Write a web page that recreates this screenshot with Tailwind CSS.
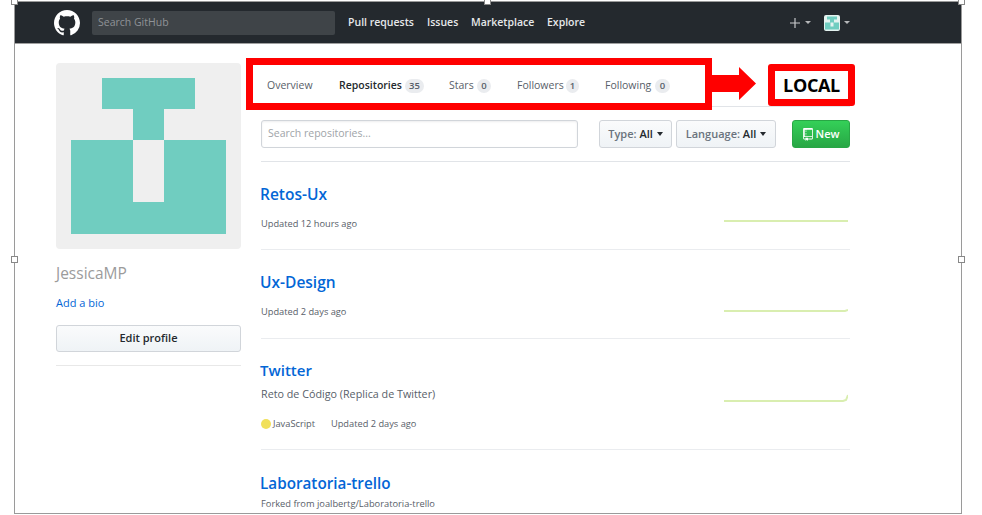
<!doctype html>
<html>
<head>
<meta charset="utf-8">
<script src="https://cdn.jsdelivr.net/npm/@tailwindcss/browser@4"></script>
</head>
<body class="bg-white overflow-hidden">
<div class="relative w-[982px] h-[515px] overflow-hidden font-['Open_Sans',sans-serif] text-[#586069]">
  <div class="ml-[14px] mt-px w-[948px] h-[513px] border border-[#9a9a9a] overflow-hidden">
    <header class="h-[42px] bg-[#24292e] border-b border-[#a0a0a0] flex items-center pl-[39px]">
      <svg viewBox="0 0 16 16" class="w-[26px] h-[26px] fill-white shrink-0"><path d="M8 0C3.58 0 0 3.58 0 8c0 3.54 2.29 6.53 5.47 7.59.4.07.55-.17.55-.38 0-.19-.01-.82-.01-1.49-2.01.37-2.53-.49-2.69-.94-.09-.23-.48-.94-.82-1.13-.28-.15-.68-.52-.01-.53.63-.01 1.08.58 1.23.82.72 1.21 1.87.87 2.33.66.07-.52.28-.87.51-1.07-1.78-.2-3.64-.89-3.64-3.95 0-.87.31-1.59.82-2.15-.08-.2-.36-1.02.08-2.12 0 0 .67-.21 2.2.82.64-.18 1.32-.27 2-.27.68 0 1.36.09 2 .27 1.53-1.04 2.2-.82 2.2-.82.44 1.1.16 1.92.08 2.12.51.56.82 1.27.82 2.15 0 3.07-1.87 3.75-3.65 3.95.29.25.54.73.54 1.48 0 1.07-.01 1.93-.01 2.2 0 .21.15.46.55.38A8.013 8.013 0 0016 8c0-4.42-3.58-8-8-8z"/></svg>
      <div class="ml-3 w-[243px] h-6 bg-[#3f4448] rounded-[2px] flex items-center pl-[6px] text-[10.5px] text-[#8f9397]">Search GitHub</div>
      <nav class="ml-[13px] flex text-[10.5px] font-semibold text-[#e6e8ea] leading-none">
        <span class="w-[79px]">Pull requests</span>
        <span class="w-[44px]">Issues</span>
        <span class="w-[76px]">Marketplace</span>
        <span>Explore</span>
      </nav>
      <div class="ml-auto mr-[111px] flex items-center">
        <svg viewBox="0 0 12 12" class="w-[10px] h-[10px] stroke-[#c9cbcd] fill-none"><path d="M6 0v12M0 6h12" stroke-width="1.4"/></svg>
        <span class="ml-[5px] w-0 h-0 border-x-[3px] border-x-transparent border-t-[3px] border-t-[#b5b7b9]"></span>
        <svg viewBox="0 0 16 16" class="ml-[13px] w-4 h-4 rounded-[2px]"><rect width="16" height="16" fill="#e4f3f0"/><path d="M3 1.5h10v3h-3v3h5v7H1v-7h5v-3H3z" fill="#70cdc0"/><rect x="6.5" y="7.5" width="3" height="4" fill="#e4f3f0"/></svg>
        <span class="ml-[4px] w-0 h-0 border-x-[3px] border-x-transparent border-t-[3px] border-t-[#b5b7b9]"></span>
      </div>
    </header>
    <main class="flex pl-[41px] pt-[19px]">
      <aside class="w-[185px] shrink-0">
        <svg viewBox="0 0 185 186" class="w-[185px] h-[186px] block rounded-[4px] bg-[#efefef]"><path d="M46 15h93v31h-31v31h62v94H15V77h62V46H46z" fill="#70cdc0"/><rect x="77" y="77" width="31" height="62" fill="#efefef"/></svg>
        <div class="mt-[13px] text-[15.5px] leading-[22px] text-[#9b9b9b]">JessicaMP</div>
        <div class="mt-[11px] text-[11px] leading-[16px] text-[#0366d6]">Add a bio</div>
        <button class="mt-[14px] w-full h-[27px] rounded-[3px] border border-[#d1d5da] bg-gradient-to-b from-[#fafbfc] to-[#eff3f6] text-[11px] font-semibold text-[#24292e]">Edit profile</button>
        <div class="mt-[13px] border-t border-[#e8e8e8]"></div>
      </aside>
      <section class="ml-[20px] w-[589px]">
        <div class="h-[44px] border-b border-[#e1e4e8] flex items-center pl-[6px] pt-[2px] text-[10.5px]">
          <span class="w-[72px]">Overview</span>
          <span class="w-[66px] font-semibold text-[#24292e]">Repositories</span>
          <span class="w-[19px] text-center rounded-full bg-[#eaecef] text-[9.5px] leading-[14px] font-semibold text-[#586069]">35</span>
          <span class="ml-[25px] w-[28px]">Stars</span>
          <span class="w-[14px] text-center rounded-full bg-[#eaecef] text-[9.5px] leading-[14px] font-semibold">0</span>
          <span class="ml-[26px] w-[49px]">Followers</span>
          <span class="w-[13px] text-center rounded-full bg-[#eaecef] text-[9.5px] leading-[14px] font-semibold">1</span>
          <span class="ml-[26px] w-[50px]">Following</span>
          <span class="w-[15px] text-center rounded-full bg-[#eaecef] text-[9.5px] leading-[14px] font-semibold">0</span>
        </div>
        <div class="mt-[13px] flex h-[28px] pb-0">
          <div class="w-[317px] rounded-[3px] border border-[#d1d5da] flex items-center pl-[6px] text-[10.5px] text-[#a0a4a8] shadow-[inset_0_1px_2px_rgba(27,31,35,0.075)]">Search repositories...</div>
          <button class="ml-[21px] w-[73px] rounded-[3px] border border-[#d1d5da] bg-gradient-to-b from-[#fafbfc] to-[#eff3f6] text-[11px] font-semibold text-[#24292e] flex items-center justify-center"><span class="text-[#6a737d]">Type:&nbsp;</span>All<span class="ml-1 w-0 h-0 border-x-[3.5px] border-x-transparent border-t-[4px] border-t-[#24292e]"></span></button>
          <button class="ml-[4px] w-[100px] rounded-[3px] border border-[#d1d5da] bg-gradient-to-b from-[#fafbfc] to-[#eff3f6] text-[11px] font-semibold text-[#24292e] flex items-center justify-center"><span class="text-[#6a737d]">Language:&nbsp;</span>All<span class="ml-1 w-0 h-0 border-x-[3.5px] border-x-transparent border-t-[4px] border-t-[#24292e]"></span></button>
          <button class="ml-[16px] w-[58px] rounded-[3px] border border-[#28a745] bg-gradient-to-b from-[#34d058] to-[#28a745] text-[11px] font-semibold text-white flex items-center justify-center"><svg viewBox="0 0 12 16" class="w-[10px] h-[13px] fill-white mr-[3px]"><path d="M4 9H3V8h1v1zm0-3H3v1h1V6zm0-2H3v1h1V4zm0-2H3v1h1V2zm8-1v12c0 .55-.45 1-1 1H6v2l-1.5-1.5L3 16v-2H1c-.55 0-1-.45-1-1V1c0-.55.45-1 1-1h10c.55 0 1 .45 1 1zm-1 10H1v2h2v-1h3v1h5v-2zm0-9H2v8h9V2z"/></svg>New</button>
        </div>
        <div class="mt-[13px] border-t border-[#e1e4e8]"></div>
        <article class="h-[88px] border-b border-[#eaecef] relative pt-[20px]">
          <h3 class="-ml-px text-[15.5px] leading-[24px] font-semibold text-[#0366d6]">Retos-Ux</h3>
          <p class="mt-[11px] text-[9.25px] leading-[14px]">Updated 12 hours ago</p>
          <svg viewBox="0 0 124 4" class="absolute left-[463px] top-[57px] w-[124px] h-1 fill-none stroke-[#d9eeb0]"><path d="M0 2h124" stroke-width="2"/></svg>
        </article>
        <article class="h-[89px] border-b border-[#eaecef] relative pt-[20px]">
          <h3 class="-ml-px text-[15.5px] leading-[24px] font-semibold text-[#0366d6]">Ux-Design</h3>
          <p class="mt-[11px] text-[9.25px] leading-[14px]">Updated 2 days ago</p>
          <svg viewBox="0 0 124 6" class="absolute left-[463px] top-[57px] w-[124px] h-[6px] fill-none stroke-[#d9eeb0]"><path d="M0 4h121l3-1" stroke-width="2"/></svg>
        </article>
        <article class="h-[111px] border-b border-[#eaecef] relative pt-[19px]">
          <h3 class="-ml-px text-[15px] leading-[24px] font-semibold text-[#0366d6]">Twitter</h3>
          <p class="mt-[4px] text-[10.75px] leading-[16px]">Reto de Código (Replica de Twitter)</p>
          <p class="mt-[15px] flex items-center text-[9.25px] leading-[14px]"><span class="w-[10px] h-[10px] rounded-full bg-[#f1e05a] mr-[2px]"></span>JavaScript<span class="ml-4">Updated 2 days ago</span></p>
          <svg viewBox="0 0 124 10" class="absolute left-[463px] top-[54px] w-[124px] h-[10px] fill-none stroke-[#d9eeb0]"><path d="M0 8h119l3-1 2-5" stroke-width="2"/></svg>
        </article>
        <article class="relative pt-[21px]">
          <h3 class="-ml-px text-[15.25px] leading-[24px] font-semibold text-[#0366d6]">Laboratoria-trello</h3>
          <p class="mt-[2px] text-[9.3px] leading-[14px]">Forked from joalbertg/Laboratoria-trello</p>
        </article>
      </section>
    </main>
  </div>

  <!-- annotation layer -->
  <div class="absolute left-[246px] top-[58px] w-[466px] h-[52px] border-[7px] border-[#ff0000]"></div>
  <svg viewBox="0 0 44 33" class="absolute left-[712px] top-[67px] w-[44px] h-[33px] fill-[#ff0000]"><path d="M0 8h27V0l17 16.5L27 33v-8H0z"/></svg>
  <div class="absolute left-[768px] top-[64px] w-[87px] h-[42px] border-[7px] border-[#ff0000] rounded-[3px] bg-white flex items-center justify-center font-bold text-[18px] text-black tracking-[-0.35px]">LOCAL</div>
  <span class="absolute left-[11px] top-[-2px] w-[7px] h-[7px] border border-[#888] bg-white"></span>
  <span class="absolute left-[484px] top-[-2px] w-[7px] h-[7px] border border-[#888] bg-white"></span>
  <span class="absolute left-[958px] top-[-2px] w-[7px] h-[7px] border border-[#888] bg-white"></span>
  <span class="absolute left-[11px] top-[256px] w-[7px] h-[7px] border border-[#888] bg-white"></span>
  <span class="absolute left-[958px] top-[256px] w-[7px] h-[7px] border border-[#888] bg-white"></span>
</div>
</body>
</html>
